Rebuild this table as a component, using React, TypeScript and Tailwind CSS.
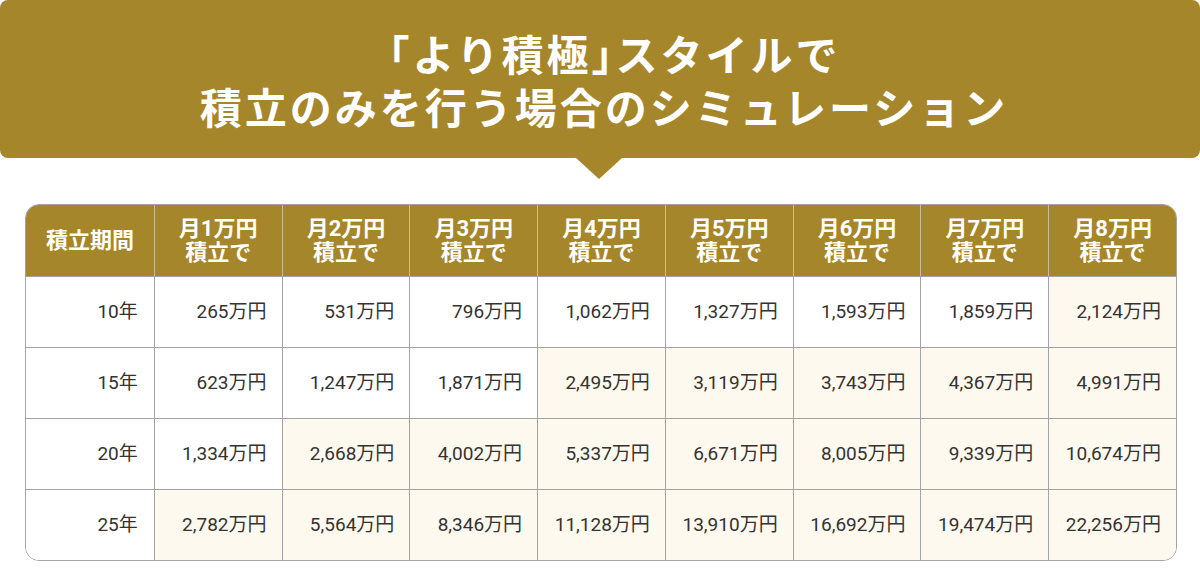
import React from "react";

const headers = ["月1万円", "月2万円", "月3万円", "月4万円", "月5万円", "月6万円", "月7万円", "月8万円"];
const rows: { label: string; values: number[] }[] = [
  { label: "10年", values: [265, 531, 796, 1062, 1327, 1593, 1859, 2124] },
  { label: "15年", values: [623, 1247, 1871, 2495, 3119, 3743, 4367, 4991] },
  { label: "20年", values: [1334, 2668, 4002, 5337, 6671, 8005, 9339, 10674] },
  { label: "25年", values: [2782, 5564, 8346, 11128, 13910, 16692, 19474, 22256] },
];

const fmt = (n: number) => n.toLocaleString("en-US");

export default function App() {
  return (
    <div
      className="w-[1200px] h-[584px] bg-white overflow-hidden"
      style={{ fontFamily: 'Roboto, "Noto Sans CJK JP", sans-serif' }}
    >
      <div
        className="h-[158px] bg-[#a6862a] rounded-[8px] flex flex-col items-center justify-center text-white font-bold text-[42px] leading-[53px] tracking-[3px] pl-[8px]"
        style={{ fontFamily: '"Noto Sans CJK JP", sans-serif' }}
      >
        <div>
          「より積極<span className="[font-feature-settings:'halt']">」</span>スタイルで
        </div>
        <div>積立のみを行う場合のシミュレーション</div>
      </div>
      <div className="flex justify-center">
        <div className="w-0 h-0 border-l-[23px] border-r-[23px] border-t-[21px] border-l-transparent border-r-transparent border-t-[#a6862a] ml-[-2px]" />
      </div>
      <div className="ml-[25px] mt-[25px] w-[1152px] border border-[#a3a3a3] rounded-[14px] overflow-hidden">
        <div className="grid grid-cols-9 h-[71px] bg-[#a6862a] text-white font-bold text-[22px] leading-[24px]">
          <div className="flex items-center justify-center">積立期間</div>
          {headers.map((h) => (
            <div key={h} className="flex flex-col items-center justify-center border-l border-[#c9bd9c]">
              <div>{h}</div>
              <div>積立で</div>
            </div>
          ))}
        </div>
        {rows.map((r) => (
          <div key={r.label} className="grid grid-cols-9 h-[71px] border-t border-[#a3a3a3] text-[19px] text-[#333333]">
            <div className="flex items-center justify-end pr-[16px] bg-white">{r.label}</div>
            {r.values.map((v, i) => (
              <div
                key={i}
                className={
                  "flex items-center justify-end pr-[15px] border-l border-[#a3a3a3] " +
                  (v >= 2000 ? "bg-[#fdf9ee]" : "bg-white")
                }
              >
                {fmt(v)}万円
              </div>
            ))}
          </div>
        ))}
      </div>
    </div>
  );
}
